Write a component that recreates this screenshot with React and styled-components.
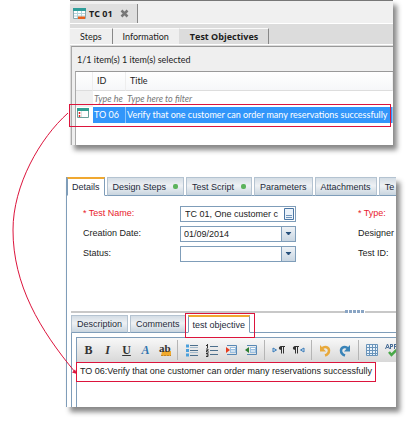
import React from "react";
import styled, { createGlobalStyle, css } from "styled-components";

const RED = "#dc143c";
const NAVY = "#1d2a3a";

const Global = createGlobalStyle`
  * { box-sizing: border-box; }
  body { margin: 0; background: #fff; }
  button, input, select, textarea { font: inherit; color: inherit; margin: 0; border-radius: 0; }
`;

const Page = styled.main`
  position: relative;
  display: flex;
  flex-direction: column;
  gap: 32px;
  padding: 0 14px 14px 66px;
`;

const Shot = styled.section`
  box-shadow: 4px 5px 5px #888;
`;

/* ---- item list window ---- */

const ListWindow = styled(Shot)`
  margin: 0 3px 0 4px;
  border-top: 1px solid #777;
  background: #dcdcdc;
  color: #1c1c1c;
  font: 9px/14px Lato, sans-serif;
`;

const TitleStrip = styled.header`
  display: flex;
  height: 23px;
  padding-top: 3px;
  background: #f0f0f0;
  border-bottom: 1px solid #fff;
`;

const WindowTab = styled.div`
  display: flex;
  align-items: center;
  width: 68px;
  padding-left: 3px;
  gap: 3px;
  background: #dfdfdf;
  border-right: 1px solid #888;
  font: bold 9px/14px "Open Sans", sans-serif;
  white-space: nowrap;
`;

const CloseButton = styled.button`
  display: flex;
  padding: 0;
  margin-left: 4px;
  border: 0;
  background: none;
`;

const PageTabs = styled.nav`
  display: flex;
  height: 21px;
  padding-top: 4px;
  border-bottom: 1px solid #fff;
`;

const PageTab = styled.button`
  padding: 0 10px;
  border: 0;
  border-right: 1px solid ${(p) => (p.$last || p.$first ? "#888" : "#dcdcdc")};
  border-top: 1px solid #fafafa;
  background: ${(p) => (p.$active ? "#dcdcdc" : "#efefef")};
  font: ${(p) => (p.$active ? 'bold 9px/14px "Open Sans", sans-serif' : "inherit")};
  white-space: nowrap;
`;

const ListBody = styled.div`
  margin-top: 1px;
  margin-left: 1px;
  padding: 6px 0 0 3px;
  height: 99px;
  border-top: 1px solid #999;
  border-left: 1px solid #aaa;
  background: #efefef;
`;

const Count = styled.p`
  margin: 0 0 4px;
  padding: 0 2px;
  height: 14px;
`;

const Items = styled.table`
  width: 100%;
  height: 74px;
  table-layout: fixed;
  border-collapse: separate;
  border-spacing: 0;
  border-top: 1px solid #999;
  border-left: 1px solid #aaa;
  background: #fff;
  th, td { padding: 0 0 0 1px; text-align: left; font-weight: 400; white-space: nowrap; }
  thead tr { height: 19px; }
  thead th { padding-left: 4px; border-right: 1px solid #eee; border-bottom: 1px solid #ddd; background: linear-gradient(#fff, #f6f7f9); }
`;

const FilterRow = styled.tr`
  height: 16px;
  color: #777;
  font-style: italic;
  td:first-child { background: #f0f0f0; }
`;

const SelectedRow = styled.tr`
  height: 16px;
  position: relative;
  color: #fff;
  td + td { background: #3296fa; border-right: 1px solid #8cc4fc; }
`;

const Frame = styled.span`
  position: absolute;
  z-index: 2;
  pointer-events: none;
  border: 1px solid ${RED};
  ${(p) =>
    ({
      row: css`left: -7px; right: 2px; top: -3px; height: 23px;`,
      tab: css`left: -4px; right: -6px; top: -4px; bottom: -6px;`,
      text: css`left: -1px; right: 20px; top: 0; height: 20px;`,
    })[p.$kind]}
`;

/* ---- test details window ---- */

const DetailWindow = styled(Shot)`
  border-left: 1px solid #7f9db9;
  background: #fff;
  color: #222;
  font: 9px/14px "Liberation Sans", sans-serif;
`;

const TabRow = styled.nav`
  display: flex;
  gap: 2px;
  height: ${(p) => (p.$nested ? 18 : 19)}px;
  overflow: ${(p) => (p.$nested ? "visible" : "hidden")};
  background: linear-gradient(#7f9db9, #7f9db9) bottom / 100% 1px no-repeat;
`;

const Tab = styled.button`
  position: relative;
  display: flex;
  align-items: center;
  flex: none;
  gap: 7px;
  padding: 0 5px;
  color: ${NAVY};
  border: 1px solid #b4c3d1;
  border-bottom-color: #7f9db9;
  background: linear-gradient(#d4dde5, #eef1f4 45%, #c9d5df);
  white-space: nowrap;
  ${(p) =>
    p.$active &&
    css`
      padding: 0 4px;
      border-color: #7f9db9;
      border-top: 2px solid #f0a830;
      border-bottom-color: #fff;
      background: #fff;
    `}
`;

const Dot = styled.i`
  width: 5px;
  height: 5px;
  border-radius: 2px;
  background: #5cb35c;
`;

const Form = styled.form`
  display: grid;
  grid-template-columns: 97px 116px 1fr;
  grid-auto-rows: 16px;
  row-gap: 4px;
  height: 114px;
  padding: 10px 0 0 16px;
  white-space: nowrap;
`;

const Label = styled.label`
  color: ${(p) => (p.$required ? "#e8192c" : "#222")};
  padding-left: ${(p) => (p.$side ? "62px" : 0)};
`;

const Field = styled.div`
  display: flex;
  align-items: center;
  height: 16px;
  border: 1px solid #7f9db9;
  background: #fff;
`;

const TextInput = styled.input`
  flex: 1;
  min-width: 0;
  height: 14px;
  padding: 0 0 0 4px;
  border: 0;
  background: none;
`;

const MoreButton = styled.button`
  display: flex;
  width: 11px;
  padding: 0;
  border: 0;
  background: none;
`;

const Drop = styled.select`
  flex: 1;
  height: 14px;
  padding: 0 3px;
  border: 0;
  appearance: none;
  background: none;
`;

const Arrow = styled.span`
  display: flex;
  align-items: center;
  justify-content: center;
  width: 14px;
  height: 14px;
  border-left: 1px solid #7f9db9;
  background: linear-gradient(#eef2f6, #c9d6e2);
`;

const Splitter = styled.div`
  display: flex;
  align-items: center;
  justify-content: flex-end;
  height: 3px;
  margin: 0 0 2px 4px;
  padding-right: 31px;
  background: linear-gradient(#c8c8c8, #c8c8c8) center / 100% 2px no-repeat;
`;

const Grip = styled.span`
  width: 20px;
  height: 3px;
  background: repeating-linear-gradient(90deg, #8aa5c4 0 3px, #fff 3px 4px);
`;

const Lower = styled.div`
  margin-left: 4px;
`;

const EditorPane = styled.div`
  padding: 4px 0 0 4px;
  border-left: 1px solid #7f9db9;
`;

const Editor = styled.div`
  border-top: 1px solid #7f9db9;
  border-left: 1px solid #7f9db9;
`;

const Toolbar = styled.div`
  display: flex;
  align-items: center;
  height: 24px;
  padding-left: 2px;
  overflow: hidden;
  background: linear-gradient(#f8f8f8, #d8d8d8);
`;

const Tool = styled.button`
  display: flex;
  flex: none;
  align-items: center;
  justify-content: center;
  width: ${(p) => (p.$letter ? 19 : 20)}px;
  height: 20px;
  padding: 0;
  border: 0;
  background: none;
  font: ${(p) => (p.$italic ? "italic " : "")}bold 12px/18px "Liberation Serif", serif;
  color: ${(p) => p.$color || "#333"};
  text-decoration: ${(p) => (p.$underline ? "underline" : "none")};
`;

const Divider = styled.span`
  flex: none;
  width: 1px;
  height: 20px;
  margin: 0 3px;
  background: #b5b5b5;
`;

const Writing = styled.div`
  position: relative;
  height: 45px;
`;

const TextBox = styled.textarea`
  display: block;
  width: 100%;
  height: 45px;
  padding: 2px 3px;
  border: 0;
  outline: 0;
  resize: none;
  overflow: hidden;
  background: #fff;
`;

const Curve = styled.svg`
  position: absolute;
  left: 0;
  top: 0;
  z-index: 3;
  pointer-events: none;
`;

/* ---- drawings ---- */

const Svg = ({ w = 14, h = 14, children }) => (
  <svg width={w} height={h} viewBox={`0 0 ${w} ${h}`} fill="none" aria-hidden="true">{children}</svg>
);

const SheetIcon = () => (
  <Svg w={13} h={13}>
    <path d="M.5 1.5h12v10H.5z" fill="#fff" stroke="#8aa8b0" />
    <path d="M0 1h13v3H0z" fill="#2f9e9a" />
    <path d="M1 6.5h11M1 9h11M4.5 4v7M8.5 4v7" stroke="#b4d4da" />
    <path d="M5 12V10l1-1 1 1 1-1 1 1 1-1 1 1 1-1v3z" fill="#e8601c" />
  </Svg>
);

const ItemIcon = () => (
  <Svg w={12} h={12}>
    <path d="M.5 1.5h11v9H.5z" fill="#fff" stroke="#6aa29c" />
    <path d="M0 1h12v3H0z" fill="#2f9e90" />
    <path d="M2.5 5v2M2.5 8v2" stroke="#e02828" strokeWidth="1.5" />
    <path d="M4.5 4v6" stroke="#d8e6e4" />
  </Svg>
);

const CloseIcon = () => (
  <Svg w={9} h={9}>
    <path d="M1.5 1.5l6 6M7.5 1.5l-6 6" stroke="#777" strokeWidth="2.5" />
  </Svg>
);

const BulletIcon = () => (
  <Svg w={13} h={13}>
    <path d="M5 1.5h8M5 6.5h8M5 11.5h8" stroke="#4c6f8c" />
    <path d="M5 3.5h8M5 8.5h8" stroke="#a6bccd" />
    <path d="M1 2h3M1 6.5h3M1 11h3" stroke="#4ba0dc" strokeWidth="3" />
  </Svg>
);

const NumberIcon = () => (
  <Svg w={13} h={13}>
    <path d="M5 2.5h8M5 6.5h8M5 10.5h8" stroke="#4c6f8c" />
    <path d="M2.5 0v4M1 1.5h1.5M1 5h2v1.5H1.5V8H4M1 9.5h2v3H1M1.5 11H3" stroke="#333" />
  </Svg>
);

const IndentIcon = ({ color, out }) => (
  <Svg w={12} h={12}>
    <path d="M2 1.5h9.5v9H2M5 4.5h6M5 7.5h6" stroke="#5888b4" />
    <path d="M5 3h6v6H5z" fill="#9cc0e0" />
    <path d="M6 4.5h4M6 7h4" stroke="#fff" />
    <path d={out ? "M4 3L0 6l4 3z" : "M1 3l4 3-4 3z"} fill={color} />
  </Svg>
);

const DirectionIcon = ({ rtl }) => (
  <Svg w={13} h={12}>
    <g transform={rtl ? "translate(-6 0)" : undefined}>
      <path d="M9.5 2.5v7M11.5 2.5v7M8.5 2.5H13" stroke="#333" />
      <path d="M9.5 2C6 2 6 6 9.5 6z" fill="#333" />
    </g>
    <path d={rtl ? "M12 4v4L8.5 6z" : "M1 4v4l3.5-2z"} fill="#c7def2" stroke="#3c7cb8" />
  </Svg>
);

const TurnIcon = ({ color, flip }) => (
  <Svg w={12} h={13}>
    <g transform={flip ? "matrix(-1 0 0 1 12 0)" : undefined}>
      <path d="M3 4.5c3-3 7-1 7 2 0 2-1 4-4 5" stroke={color} strokeWidth="2.5" />
      <path d="M1 1v6.5h6z" fill={color} />
    </g>
  </Svg>
);

const GridIcon = () => (
  <Svg w={12} h={12}>
    <path d="M.5.5h11v11H.5z" fill="#eaf3fb" />
    <path d="M.5.5h11v11H.5zM.5 3.5h11M.5 6.5h11M.5 9.5h11M3.5.5v11M6.5.5v11M9.5.5v11" stroke="#6a94ba" />
  </Svg>
);

const SpellIcon = () => (
  <Svg w={12} h={14}>
    <path d="M.5 6L2.5 1l2 5M1.500 4.500h2M5.500 1v5M5.500 1.500h2v2h-2M9.500 1v5M9.500 1.500h2v2h-2" stroke="#456a94" />
    <path d="M4 9l2.500 3L11.500 7" stroke="#48a848" strokeWidth="2.500" />
  </Svg>
);

const HighlightIcon = () => (
  <Svg w={14} h={14}>
    <path d="M4 8h9v5H3z" fill="#f0a92c" />
    <text x="1" y="9" fontFamily="Liberation Serif, serif" fontWeight="700" fontSize="11" fill="#333">ab</text>
    <path d="M3 12.500h10" stroke="#c08428" strokeDasharray="2 1" />
  </Svg>
);

const PageIcon = () => (
  <Svg w={10} h={12}>
    <path d="M.5.5h9v11h-9z" fill="#eaf2fa" stroke="#4b76a4" />
    <path d="M2 7.5h6M2 9.5h6" stroke="#6f94ba" />
  </Svg>
);

const DropIcon = () => (
  <Svg w={7} h={4}><path d="M1 0h5L3.5 3z" fill="#27507c" stroke="#27507c" /></Svg>
);

const mainTabs = [
  { name: "Details", active: true },
  { name: "Design Steps", dot: true },
  { name: "Test Script", dot: true },
  { name: "Parameters" },
  { name: "Attachments" },
  { name: "Te" },
];

export default function App() {
  return (
    <Page>
      <Global />
      <ListWindow>
        <TitleStrip>
          <WindowTab>
            <SheetIcon />
            TC 01
            <CloseButton aria-label="Close TC 01"><CloseIcon /></CloseButton>
          </WindowTab>
        </TitleStrip>
        <PageTabs>
          <PageTab $first>Steps</PageTab>
          <PageTab>Information</PageTab>
          <PageTab $active $last>Test Objectives</PageTab>
        </PageTabs>
        <ListBody>
          <Count>1/1 item(s) 1 item(s) selected</Count>
          <Items>
            <colgroup><col width="17" /><col width="33" /><col /></colgroup>
            <thead><tr><th aria-label="Kind" /><th>ID</th><th>Title</th></tr></thead>
            <tbody>
              <FilterRow><td /><td>Type he</td><td>Type here to filter</td></FilterRow>
              <SelectedRow>
                <td><ItemIcon /><Frame $kind="row" /></td>
                <td>TO 06</td>
                <td>Verify that one customer can order many reservations successfully</td>
              </SelectedRow>
              <tr><td /><td /><td /></tr>
            </tbody>
          </Items>
        </ListBody>
      </ListWindow>

      <DetailWindow>
        <TabRow>
          {mainTabs.map((t) => (
            <Tab key={t.name} $active={t.active}>{t.name}{t.dot && <Dot />}</Tab>
          ))}
        </TabRow>
        <Form>
          <Label htmlFor="name" $required>* Test Name:</Label>
          <Field>
            <TextInput id="name" defaultValue="TC 01, One customer c" />
            <MoreButton type="button" aria-label="Edit test name"><PageIcon /></MoreButton>
          </Field>
          <Label as="span" $required $side>* Type:</Label>
          <Label htmlFor="created">Creation Date:</Label>
          <Field>
            <Drop id="created"><option>01/09/2014</option></Drop>
            <Arrow><DropIcon /></Arrow>
          </Field>
          <Label as="span" $side>Designer</Label>
          <Label htmlFor="status">Status:</Label>
          <Field>
            <Drop id="status"><option></option></Drop>
            <Arrow><DropIcon /></Arrow>
          </Field>
          <Label as="span" $side>Test ID:</Label>
        </Form>
        <Splitter><Grip /></Splitter>
        <Lower>
          <TabRow $nested>
            <Tab>Description</Tab>
            <Tab>Comments</Tab>
            <Tab $active>test objective<Frame $kind="tab" /></Tab>
          </TabRow>
          <EditorPane>
            <Editor>
              <Toolbar>
                <Tool aria-label="Bold" $letter>B</Tool>
                <Tool aria-label="Italic" $letter $italic>I</Tool>
                <Tool aria-label="Underline" $letter $underline>U</Tool>
                <Tool aria-label="Font" $letter $italic $color="#2f74ae">A</Tool>
                <Tool aria-label="Highlight" $letter><HighlightIcon /></Tool>
                <Divider />
                <Tool aria-label="Bulleted list"><BulletIcon /></Tool>
                <Tool aria-label="Numbered list"><NumberIcon /></Tool>
                <Tool aria-label="Indent"><IndentIcon color="#e63c1e" /></Tool>
                <Tool aria-label="Outdent"><IndentIcon color="#2e7d32" out /></Tool>
                <Divider />
                <Tool aria-label="Left to right"><DirectionIcon /></Tool>
                <Tool aria-label="Right to left"><DirectionIcon rtl /></Tool>
                <Divider />
                <Tool aria-label="Undo"><TurnIcon color="#e8a93c" /></Tool>
                <Tool aria-label="Redo"><TurnIcon color="#3a84b8" flip /></Tool>
                <Divider />
                <Tool aria-label="Table" $letter><GridIcon /></Tool>
                <Tool aria-label="Spelling" $letter><SpellIcon /></Tool>
              </Toolbar>
              <Writing>
                <TextBox
                  aria-label="Test objective"
                  defaultValue="TO 06:Verify that one customer can order many reservations successfully"
                />
                <Frame $kind="text" />
              </Writing>
            </Editor>
          </EditorPane>
        </Lower>
      </DetailWindow>

      <Curve width="80" height="380" viewBox="0 0 80 380" fill="none" aria-hidden="true">
        <path d="M68 113C40 138 13 185 13 230C13 285 40 330 75 372" stroke={RED} />
        <path d="M77 374l-5-1.5 3-3z" fill={RED} />
      </Curve>
    </Page>
  );
}
